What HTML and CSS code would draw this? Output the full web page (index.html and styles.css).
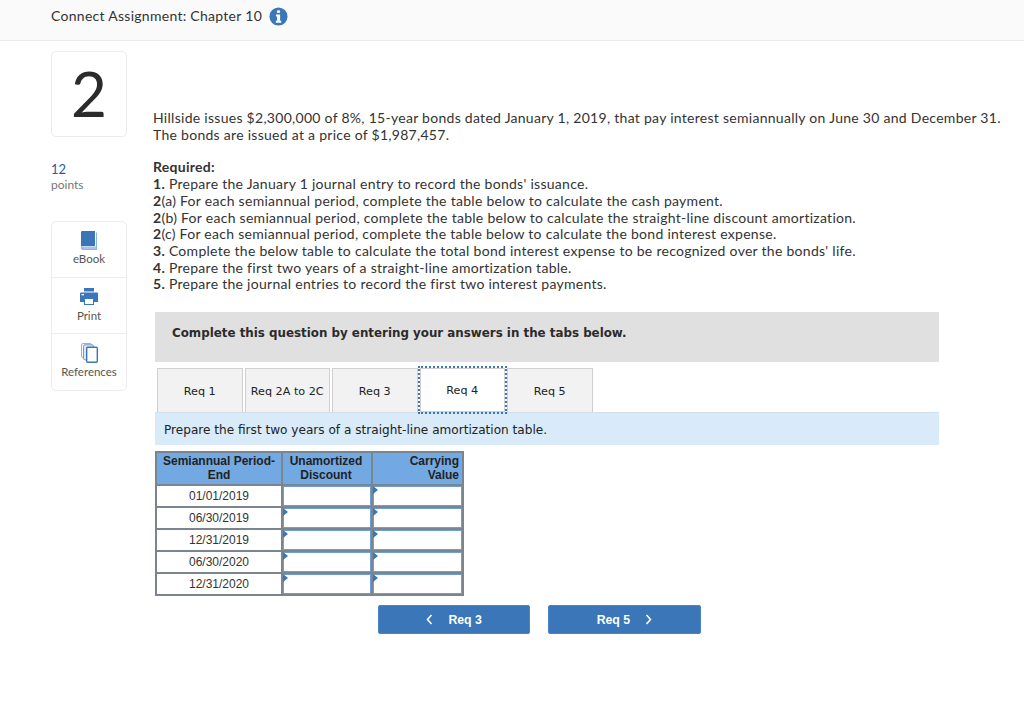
FILE: index.html
```html
<!DOCTYPE html>
<html lang="en">
<head>
<meta charset="utf-8">
<title>Connect Assignment: Chapter 10</title>
<link rel="stylesheet" href="styles.css">
</head>
<body>
<header class="topbar">
  <span class="topbar-title">Connect Assignment: Chapter 10</span>
  <svg class="info-icon" viewBox="0 0 20 20" width="19" height="19"><circle cx="10" cy="10" r="9.5" fill="#3a76b8"/><rect x="8.3" y="3.4" width="3.4" height="3" rx="1.2" fill="#fff"/><path d="M7.3 8h4.4v6.6h1.2v2H7.2v-2h1.3v-4.6H7.3z" fill="#fff"/></svg>
</header>
<div class="page">
  <aside class="side">
    <div class="qnum">2</div>
    <div class="points"><div class="points-num">12</div><div class="points-label">points</div></div>
    <div class="tools">
      <div class="tool">
        <svg viewBox="0 0 16 19" width="16" height="19"><path d="M0 1.200A1.200 1.200 0 0 1 1.200 0H14v15H1.600A1.600 1.600 0 0 0 0 16z" fill="#3a76b8"/><path d="M15 1.500h1V19H2a2 2 0 0 1-2-2c0-1 .8-1.500 1.600-1.500H15z" fill="#8fb3dc"/><rect x="2" y="16.500" width="13" height="1" fill="#c4d8ee"/></svg>
        <span>eBook</span>
      </div>
      <div class="tool tool-print">
        <svg viewBox="0 0 18 17" width="18" height="17"><rect x="4" y="0" width="10" height="3.500" fill="#3a76b8"/><path d="M0 5.500a1 1 0 0 1 1-1h16a1 1 0 0 1 1 1V14h-4v-4H4v4H0z" fill="#3a76b8"/><rect x="1.500" y="6" width="2.500" height="1.300" fill="#fff"/><rect x="4.500" y="10.500" width="9" height="6" fill="#fff" stroke="#3a76b8"/></svg>
        <span>Print</span>
      </div>
      <div class="tool">
        <svg viewBox="0 0 17 20" width="17" height="20"><rect x="0.500" y="0.500" width="10" height="14" rx="1.500" fill="#fff" stroke="#8fb3dc"/><rect x="2.500" y="1.800" width="10" height="15" rx="1.500" fill="#dbe7f4" stroke="#6d9bd0"/><rect x="5.700" y="4.200" width="10.600" height="15" rx="1" fill="#fff" stroke="#3a76b8" stroke-width="1.400"/></svg>
        <span>References</span>
      </div>
    </div>
  </aside>
  <main class="main">
    <p class="intro">Hillside issues $2,300,000 of 8%, 15-year bonds dated January 1, 2019, that pay interest semiannually on June 30 and December 31.<br>The bonds are issued at a price of $1,987,457.</p>
    <p class="reqs"><b>Required:</b><br>
    <b>1.</b> Prepare the January 1 journal entry to record the bonds' issuance.<br>
    <b>2</b>(a) For each semiannual period, complete the table below to calculate the cash payment.<br>
    <b>2</b>(b) For each semiannual period, complete the table below to calculate the straight-line discount amortization.<br>
    <b>2</b>(c) For each semiannual period, complete the table below to calculate the bond interest expense.<br>
    <b>3.</b> Complete the below table to calculate the total bond interest expense to be recognized over the bonds' life.<br>
    <b>4.</b> Prepare the first two years of a straight-line amortization table.<br>
    <b>5.</b> Prepare the journal entries to record the first two interest payments.</p>
    <div class="question">
      <div class="banner">Complete this question by entering your answers in the tabs below.</div>
      <div class="tabs">
        <div class="tab">Req 1</div>
        <div class="tab">Req 2A to 2C</div>
        <div class="tab">Req 3</div>
        <div class="tab active">Req 4</div>
        <div class="tab">Req 5</div>
      </div>
      <div class="prompt">Prepare the first two years of a straight-line amortization table.</div>
      <table class="amort">
        <colgroup><col class="c1"><col class="c2"><col class="c3"></colgroup>
        <thead><tr><th>Semiannual Period-End</th><th class="mid">Unamortized Discount</th><th class="right">Carrying Value</th></tr></thead>
        <tbody>
          <tr><td>01/01/2019</td><td class="in"></td><td class="in flag"></td></tr>
          <tr><td>06/30/2019</td><td class="in flag"></td><td class="in flag"></td></tr>
          <tr><td>12/31/2019</td><td class="in flag"></td><td class="in flag"></td></tr>
          <tr><td>06/30/2020</td><td class="in flag"></td><td class="in flag"></td></tr>
          <tr><td>12/31/2020</td><td class="in flag"></td><td class="in flag"></td></tr>
        </tbody>
      </table>
      <div class="nav">
        <button class="nav-btn"><svg viewBox="0 0 7 11" width="7" height="11"><path d="M5.500 1L1.500 5.500l4 4.500" fill="none" stroke="#fff" stroke-width="1.600"/></svg>Req 3</button>
        <button class="nav-btn">Req 5<svg viewBox="0 0 7 11" width="7" height="11"><path d="M1.500 1l4 4.500-4 4.500" fill="none" stroke="#fff" stroke-width="1.600"/></svg></button>
      </div>
    </div>
  </main>
</div>
</body>
</html>
```
FILE: styles.css
```css
* { box-sizing: border-box; }
html, body { margin: 0; padding: 0; background: #fff; }
body { font-family: "Lato", "Liberation Sans", sans-serif; color: #2f2f2f; width: 1024px; height: 728px; overflow: hidden; }

.topbar { height: 41px; background: #fafafa; border-bottom: 1px solid #ececec; display: flex; align-items: center; padding: 0 0 9px 51px; gap: 7px; font-size: 14px; color: #333; }
.topbar-title { letter-spacing: 0.28px; }
.info-icon { display: block; margin-top: 1px; }

.page { display: flex; padding: 10px 0 0 51px; }
.side { width: 76px; flex: none; margin-right: 26px; }
.qnum { width: 76px; height: 86px; border: 1px solid #ececec; border-radius: 5px; display: flex; align-items: center; justify-content: center; padding-bottom: 3px; font-size: 62px; color: #2b2b2b; font-weight: 400; }
.points { margin-top: 25px; height: 59px; line-height: 15px; }
.points-num { color: #2a5a9c; font-size: 13px; }
.points-label { color: #777; font-size: 12px; }
.tools { border: 1px solid #ececec; border-radius: 5px; }
.tool { height: 56px; display: flex; flex-direction: column; align-items: center; padding-top: 9px; font-size: 11.500px; line-height: 14px; color: #555; border-bottom: 1px solid #ececec; gap: 2px; }
.tool-print { padding-top: 10px; gap: 4px; }
.tool:last-child { border-bottom: 0; }
.tool svg { display: block; }

.main { width: 860px; flex: none; font-size: 14px; line-height: 16.700px; color: #333; letter-spacing: 0.28px; }
.intro { margin: 59px 0 0; white-space: nowrap; }
.reqs { margin: 16px 0 0; white-space: nowrap; }
.reqs b { font-weight: 700; }

.question { margin: 19px 0 0 2px; width: 784px; }
.banner { height: 50px; background: #e0e0e0; display: flex; align-items: center; padding: 0 0 7px 17px; font-family: "DejaVu Sans", sans-serif; font-weight: 700; font-size: 11.870px; letter-spacing: 0; color: #2b2b2b; }
.tabs { display: flex; margin: 6px 0 0 2px; height: 44px; gap: 2px; align-items: flex-end; }
.tab { width: 85.500px; height: 44px; padding-top: 3px; background: #f2f2f2; border: 1px solid #cfcfcf; border-bottom: 0; display: flex; align-items: center; justify-content: center; font-family: "DejaVu Sans", sans-serif; font-size: 11.200px; letter-spacing: 0; color: #222; }
.tab.active { background: #fff; outline: 2px dotted #3a76b8; outline-offset: 0; border: 1px solid #cfcfcf; padding-top: 2px; }
.prompt { height: 33px; padding: 2px 0 0 9px; background: #d9eaf8; border-top: 1px solid #cfe0ee; display: flex; align-items: center; font-family: "DejaVu Sans", sans-serif; font-size: 12.100px; letter-spacing: 0; color: #222; }

.amort { margin-top: 6px; border-collapse: collapse; table-layout: fixed; width: 307px; font-family: "Liberation Sans", sans-serif; font-size: 12px; line-height: 14px; letter-spacing: 0; }
.c1 { width: 126px; } .c2 { width: 90px; } .c3 { width: 91px; }
.amort th { background: #73a9e2; border: 2px solid #7a858f; padding: 0 3px 2px; font-weight: 700; text-align: center; color: #222; height: 33px; }
.amort th.mid { padding-right: 5px; }
.amort th.right { text-align: right; padding-right: 3px; }
.amort td { border: 2px solid #7a858f; height: 22px; padding: 0; text-align: center; color: #333; }
.amort td.in { position: relative; box-shadow: inset 0 0 0 1px #6f9fd2; }
.amort td.flag::before { content: ""; position: absolute; top: 0; left: 0; border-left: 5px solid #3a76b8; border-top: 4px solid transparent; border-bottom: 4px solid transparent; }

.nav { display: flex; gap: 18px; margin: 9px 0 0 223px; }
.nav-btn { width: 152.250px; height: 29px; background: #3a76b8; border: 1px solid #4a84c2; border-radius: 2px; color: #fff; font-family: "Liberation Sans", sans-serif; font-weight: 700; font-size: 12.300px; display: flex; align-items: center; justify-content: center; gap: 15px; padding: 0; }
```
